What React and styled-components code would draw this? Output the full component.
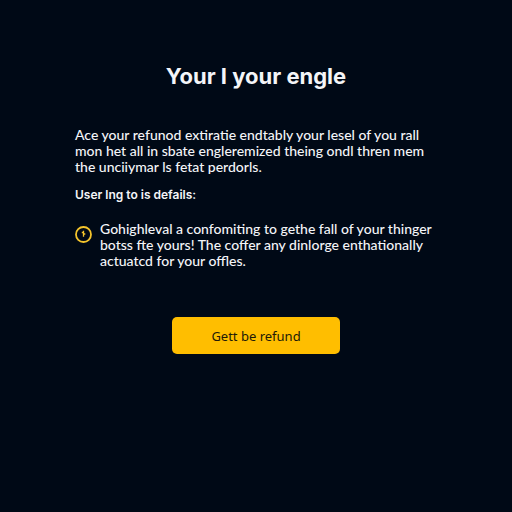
import React from "react";
import styled, { createGlobalStyle } from "styled-components";

const GlobalStyle = createGlobalStyle`
  * {
    box-sizing: border-box;
  }

  body {
    margin: 0;
    background: #000916;
    color: #f4f5f8;
    font-family: Lato, "Open Sans", sans-serif;
    font-size: 14px;
    font-weight: 500;
    line-height: 16px;
  }
`;

const Page = styled.main`
  display: flex;
  flex-direction: column;
  align-items: center;
  min-height: 100vh;
  padding: 60px 24px;
`;

const Title = styled.h1`
  margin: 0;
  font-family: Inter, sans-serif;
  font-size: 22px;
  font-weight: 700;
  line-height: 32px;
  text-align: center;
`;

const Content = styled.section`
  display: flex;
  flex-direction: column;
  gap: 12px;
  width: 100%;
  max-width: 362px;
  margin-top: 35px;
`;

const Paragraph = styled.p`
  margin: 0;
`;

const Subheading = styled.h2`
  margin: 0;
  font-family: Inter, sans-serif;
  font-size: 12px;
  font-weight: 600;
  line-height: 16px;
`;

const Notice = styled.div`
  display: flex;
  align-items: flex-start;
  gap: 8px;
  margin-top: 6px;
`;

const NoticeIcon = styled.svg`
  flex: none;
  width: 17px;
  height: 17px;
  margin-top: 5px;
`;

const RefundButton = styled.button`
  width: 168px;
  height: 37px;
  margin-top: 48px;
  border: 0;
  border-radius: 5px;
  background: #ffbe00;
  color: #201a08;
  font: 400 13px/16px "Noto Sans", sans-serif;
  cursor: pointer;
`;

export default function App() {
  return (
    <>
      <GlobalStyle />
      <Page>
        <Title>Your I your engle</Title>
        <Content>
          <Paragraph>
            Ace your refunod extiratie endtably your lesel of you rall
            <br />
            mon het all in sbate engleremized theing ondl thren mem
            <br />
            the unciiymar ls fetat perdorls.
          </Paragraph>
          <Subheading>User lng to is defails:</Subheading>
          <Notice>
            <NoticeIcon viewBox="0 0 17 17" fill="none" aria-hidden="true">
              <circle cx="8.5" cy="8.5" r="7.5" stroke="#f5c52c" strokeWidth="1.8" />
              <path d="M8.5 4.8v6M6.8 6.5h1.7M8.5 8h1.8" stroke="#f5c52c" strokeWidth="1.3" />
            </NoticeIcon>
            <Paragraph>
              Gohighleval a confomiting to gethe fall of your thinger
              <br />
              botss fte yours! The coffer any dinlorge enthationally
              <br />
              actuatcd for your offles.
            </Paragraph>
          </Notice>
        </Content>
        <RefundButton type="button">Gett be refund</RefundButton>
      </Page>
    </>
  );
}
